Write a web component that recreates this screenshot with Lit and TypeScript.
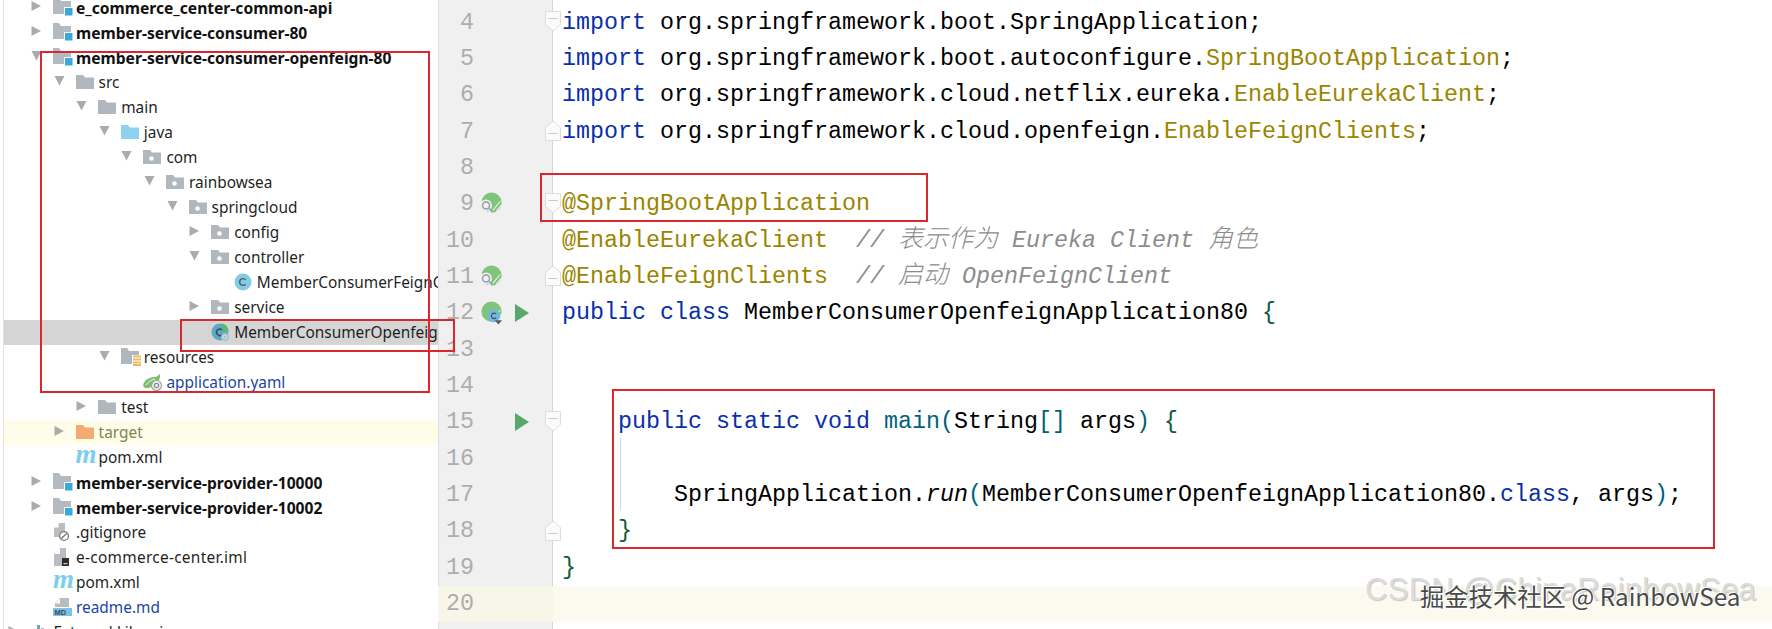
import { LitElement, html, css, svg } from "lit";
import { customElement } from "lit/decorators.js";

const folderPath = "M0 1.5h7l2 2.5h9v11.5H0z";
const folder = (c: string, dot = false) => svg`<svg width="19" height="18" viewBox="0 0 19 18"><path d=${folderPath} fill=${c} transform="translate(0 0.5)"/>${dot ? svg`<circle cx="8.5" cy="10.5" r="2.3" fill="#fff"/>` : ""}</svg>`;
const moduleIco = svg`<svg width="20" height="20" viewBox="0 0 20 20"><path d="M0 1h6l2 3h10v13H0z" fill="#b4bac1"/><rect x="11" y="10" width="8" height="8" fill="#fff"/><rect x="12" y="11" width="7.5" height="7.5" fill="#3ba8dc"/></svg>`;
const resources = svg`<svg width="21" height="20" viewBox="0 0 21 20"><path d="M0 1h6l2 3h10v13H0z" fill="#b0b7be"/><rect x="11" y="8" width="9" height="11" fill="#fff"/><path d="M12 9.5h8M12 12.5h8M12 15.5h8M12 18h8" stroke="#e6bd62" stroke-width="1.8"/></svg>`;
const classIco = svg`<svg width="18" height="18" viewBox="0 0 18 18"><circle cx="9" cy="9" r="8.5" fill="#82cce4"/><path d="M11.6 6.8A3.4 3.4 0 1 0 11.6 11.2" fill="none" stroke="#4a5a62" stroke-width="1.4"/></svg>`;
const mainClass = svg`<svg width="20" height="20" viewBox="0 0 20 20"><circle cx="9" cy="10" r="8.5" fill="#59a9c9"/><path d="M11 1.5a8.5 8.5 0 0 1 6.5 7.5h-6.5z" fill="#5fb95f"/><path d="M11 8A3.2 3.2 0 1 0 11 12.6" fill="none" stroke="#3c4a52" stroke-width="1.4"/><circle cx="14" cy="15" r="4" fill="#a9bccb"/><circle cx="14" cy="15" r="2" fill="none" stroke="#dde5ea" stroke-width="1"/></svg>`;
const yaml = svg`<svg width="20" height="18" viewBox="0 0 20 18"><path d="M0 13C1 6 7 4 13 4l4-3c.5 4-1 7-3 9l-8 5H2z" fill="#7cc06c"/><path d="M3 12c3-4 6-5 9-6" stroke="#fff" stroke-width="1" fill="none"/><circle cx="13.5" cy="12.5" r="5" fill="#f2f2f2" stroke="#9aa5ad" stroke-width="1.2"/><circle cx="13.5" cy="12.5" r="2.2" fill="none" stroke="#7f8b93" stroke-width="1.2"/></svg>`;
const mavenIco = html`<span class="mvn">m</span>`;
const fileBase = "M5 0h6v14H0V5z";
const gitIco = svg`<svg width="16" height="20" viewBox="0 0 16 20"><path d=${fileBase} fill="#b9bdc2" transform="translate(1 1)"/><path d="M1 5.5 5.5 1v4.5z" fill="#fff"/><circle cx="11" cy="14" r="4.400" fill="#fff" stroke="#777" stroke-width="1.3"/><path d="M8.200 16.600 13.800 11.400" stroke="#777" stroke-width="1.3"/></svg>`;
const imlIco = svg`<svg width="16" height="20" viewBox="0 0 16 20"><path d="M6 0h6v18H0V6z" fill="#b9bdc2" transform="translate(1 1)"/><path d="M1 7 7 1v6z" fill="#fff"/><rect x="9" y="11" width="7" height="8" fill="#2c2c2c"/><rect x="10.500" y="16" width="4" height="1.200" fill="#ccc"/></svg>`;
const mdIco = svg`<svg width="20" height="20" viewBox="0 0 20 20"><path d="M7 1h9v9H2V6z" fill="#b9bdc2"/><path d="M2 6.500 7 1.500v5z" fill="#fff"/><rect x="0" y="11" width="19" height="8" fill="#7cc3e4"/><text x="1.500" y="18" font-family="Liberation Sans" font-weight="700" font-size="7.500" fill="#3a4a5c">MD</text></svg>`;
const libIco = svg`<svg width="20" height="18" viewBox="0 0 20 18"><rect x="3" y="6" width="3" height="12" fill="#8fbf7f"/><rect x="7" y="2" width="3" height="16" fill="#7f9fb0"/><rect x="11" y="5" width="3" height="13" fill="#b0b6bd"/></svg>`;

type Row = { d: number; a?: "r" | "d"; i: unknown; t: string; c?: string };
const rows: Row[] = [
  { d: 0, a: "r", i: moduleIco, t: "e_commerce_center-common-api", c: "b" },
  { d: 0, a: "r", i: moduleIco, t: "member-service-consumer-80", c: "b" },
  { d: 0, a: "d", i: moduleIco, t: "member-service-consumer-openfeign-80", c: "b" },
  { d: 1, a: "d", i: folder("#b0b7be"), t: "src" },
  { d: 2, a: "d", i: folder("#b0b7be"), t: "main" },
  { d: 3, a: "d", i: folder("#8dd3ee"), t: "java" },
  { d: 4, a: "d", i: folder("#b0b7be", true), t: "com" },
  { d: 5, a: "d", i: folder("#b0b7be", true), t: "rainbowsea" },
  { d: 6, a: "d", i: folder("#b0b7be", true), t: "springcloud" },
  { d: 7, a: "r", i: folder("#b0b7be", true), t: "config" },
  { d: 7, a: "d", i: folder("#b0b7be", true), t: "controller" },
  { d: 8, i: classIco, t: "MemberConsumerFeignController" },
  { d: 7, a: "r", i: folder("#b0b7be", true), t: "service" },
  { d: 7, i: mainClass, t: "MemberConsumerOpenfeignApplication80", c: "sel" },
  { d: 3, a: "d", i: resources, t: "resources" },
  { d: 4, i: yaml, t: "application.yaml", c: "blue" },
  { d: 2, a: "r", i: folder("#b0b7be"), t: "test" },
  { d: 1, a: "r", i: folder("#f3ab70"), t: "target", c: "tgt" },
  { d: 1, i: mavenIco, t: "pom.xml" },
  { d: 0, a: "r", i: moduleIco, t: "member-service-provider-10000", c: "b" },
  { d: 0, a: "r", i: moduleIco, t: "member-service-provider-10002", c: "b" },
  { d: 0, i: gitIco, t: ".gitignore" },
  { d: 0, i: imlIco, t: "e-commerce-center.iml", c: "sp" },
  { d: 0, i: mavenIco, t: "pom.xml" },
  { d: 0, i: mdIco, t: "readme.md", c: "blue" },
  { d: -1, a: "r", i: libIco, t: "External Libraries" },
];

const arrow = (a?: "r" | "d") =>
  a === "r"
    ? svg`<svg width="11" height="12" viewBox="0 0 11 12"><path d="M0.500 1 10 6 0.500 11z" fill="#ababab"/></svg>`
    : a === "d"
    ? svg`<svg width="11" height="12" viewBox="0 0 11 12"><path d="M0.500 1h10L5.500 10.500z" fill="#ababab"/></svg>`
    : "";

const springIco = (main = false) => svg`<svg width="24" height="26" viewBox="0 0 24 26">
  <circle cx="11.500" cy="11.500" r="11" fill="#7fc47a"/>
  <path d="M13 20 21 10M16.500 21 22 14.500" stroke="#f0f0f0" stroke-width="1.200"/>
  ${main
    ? svg`<circle cx="14" cy="16" r="7" fill="#6fb9e0"/><path d="M16.500 14A3 3 0 1 0 16.500 18.200" fill="none" stroke="#46525c" stroke-width="1.300"/><path d="M15 21h8l-4 4.500z" fill="#5c5c5c"/>`
    : svg`<circle cx="5.500" cy="14.500" r="6.500" fill="#f0f0f0"/><path d="M8 18 13 23H8z" fill="#f0f0f0"/><circle cx="5.500" cy="14.500" r="3.800" fill="#f0f0f0" stroke="#9aa3ad" stroke-width="1.700"/><path d="M8.500 17.500 12.500 22" stroke="#9aa3ad" stroke-width="1.800"/>`}
</svg>`;
const play = svg`<svg width="14" height="18" viewBox="0 0 14 18"><path d="M0 0 14 9 0 18z" fill="#59a869"/></svg>`;
const foldD = svg`<svg width="16" height="21" viewBox="0 0 16 21"><path d="M.5.5h15v13L8 20 .5 13.500z" fill="#fbfbfb" stroke="#dcdcdc"/><path d="M3.500 7.500h9" stroke="#c9c9c9"/></svg>`;
const foldU = svg`<svg width="16" height="21" viewBox="0 0 16 21"><path d="M.5 20.500h15v-13L8 1 .5 7.500z" fill="#fbfbfb" stroke="#dcdcdc"/><path d="M3.500 13.500h9" stroke="#c9c9c9"/></svg>`;

const k = (s: string) => html`<span class="kw">${s}</span>`;
const an = (s: string) => html`<span class="an">${s}</span>`;
const cm = (s: string) => html`<span class="cm">${s}</span>`;
const cj = (s: string) => html`<span class="cm cj">${s}</span>`;

type Line = { n: number; code?: unknown; spring?: "s" | "m"; run?: boolean; fold?: "d" | "u"; cur?: boolean };
const lines: Line[] = [
  { n: 4, fold: "d", code: html`${k("import")} org.springframework.boot.SpringApplication;` },
  { n: 5, code: html`${k("import")} org.springframework.boot.autoconfigure.${an("SpringBootApplication")};` },
  { n: 6, code: html`${k("import")} org.springframework.cloud.netflix.eureka.${an("EnableEurekaClient")};` },
  { n: 7, fold: "u", code: html`${k("import")} org.springframework.cloud.openfeign.${an("EnableFeignClients")};` },
  { n: 8 },
  { n: 9, spring: "s", fold: "d", code: an("@SpringBootApplication") },
  { n: 10, code: html`${an("@EnableEurekaClient")}  ${cm("// ")}${cj("表示作为")}${cm(" Eureka Client ")}${cj("角色")}` },
  { n: 11, spring: "s", fold: "u", code: html`${an("@EnableFeignClients")}  ${cm("// ")}${cj("启动")}${cm(" OpenFeignClient")}` },
  { n: 12, spring: "m", run: true, code: html`${k("public")} ${k("class")} MemberConsumerOpenfeignApplication80 <span class="br">{</span>` },
  { n: 13 },
  { n: 14 },
  { n: 15, run: true, fold: "d", code: html`    ${k("public")} ${k("static")} ${k("void")} <span class="fn">main(</span>String<span class="fn">[]</span> args<span class="fn">)</span> <span class="br">{</span>` },
  { n: 16 },
  { n: 17, code: html`        SpringApplication.<i>run</i><span class="fn">(</span>MemberConsumerOpenfeignApplication80.${k("class")}, args<span class="fn">)</span>;` },
  { n: 18, fold: "u", code: html`    <span class="br">}</span>` },
  { n: 19, code: html`<span class="br">}</span>` },
  { n: 20, cur: true },
];

const boxes = [
  [40, 51, 390, 342],
  [180, 319, 275, 33],
  [540, 173, 388, 49],
  [612, 389, 1103, 160],
];

@customElement("app-root")
export class AppRoot extends LitElement {
  static styles = css`
    :host { display: block; width: 1772px; height: 629px; position: relative; overflow: hidden; background: #fff; }
    .page { display: flex; height: 629px; overflow: hidden; }
    .side { flex: none; width: 435px; margin-left: 3px; border-left: 1px solid #e2e2e2; box-sizing: border-box; overflow: hidden; }
    .tree { margin-top: -5px; margin-left: -4px; }
    .row { height: 25px; display: flex; align-items: center; box-sizing: border-box; white-space: nowrap; font: 15.4px "Noto Sans", sans-serif; color: #1f1f1f; }
    .row .ar { flex: none; width: 22px; display: flex; align-items: center; margin-top: -3px; }
    .row .ic { flex: none; width: 23px; height: 25px; display: flex; align-items: center; margin-top: -1px; }
    .row.b { font-weight: 700; font-size: 15.62px; color: #111; }
    .row.sel { background: #d5d5d5; margin-left: 4px; }
    .row.tgt { background: #fdfde9; color: #83834f; margin-left: 4px; }
    .row.blue { color: #1c45a5; }
    .row.sp { letter-spacing: 0.3px; }
    .mvn { font: italic 700 27px/20px "Liberation Serif", serif; letter-spacing: -1px; margin-top: -6px; color: #7dcdec; }
    .editor { flex: 1; padding-top: 4.5px; font: 23.33px "Liberation Mono", monospace; color: #000; position: relative; min-width: 0; }
    .editor::before { content: ""; position: absolute; left: 0; top: 0; bottom: 0; width: 115px; box-sizing: border-box; background: #f0f0f0; border-left: 1px solid #dedede; border-right: 1px solid #d4d4d4; }
    .line { height: 36.33px; display: flex; align-items: center; position: relative; white-space: pre; }
    .line.cur { background: #fcfaef; }
    .gut { flex: none; width: 115px; height: 100%; display: flex; align-items: center; color: #adadad; }
    .cur .gut { background: #f8f6e9; }
    .num { flex: none; width: 36px; text-align: right; }
    .g1 { flex: none; width: 22px; margin-left: 7px; height: 26px; display: flex; }
    .g2 { flex: none; width: 14px; margin-left: 12px; height: 18px; display: flex; }
    .g3 { flex: none; width: 16px; margin-left: 16px; height: 21px; display: flex; margin-top: -2px; }
    .code { padding-left: 9px; line-height: 36px; }
    .kw { color: #0a2fa8; }
    .an { color: #9a8500; }
    .cm { color: #8c8c8c; font-style: italic; }
    .cj { font-family: "Noto Sans CJK SC", sans-serif; font-size: 25px; line-height: 0; font-weight: 300; }
    .fn { color: #00627a; }
    .br { color: #0d5c3a; }
    .guide { position: absolute; left: 620px; top: 438px; width: 1px; height: 72px; background: #d8d8d8; }
    .red { position: absolute; box-sizing: border-box; border: 2.5px solid #d9272e; pointer-events: none; }
    .wm1 { position: absolute; left: 1365px; top: 572px; white-space: nowrap; font: 31px "Liberation Sans", sans-serif; color: #dcdcdc; letter-spacing: 0.3px; text-shadow: 1px 1px 1px #c4c4c4, -1px -1px 0 #fff; }
    .wm2 { position: absolute; left: 1420px; top: 578px; white-space: nowrap; font: 24.3px "Noto Sans CJK SC", sans-serif; color: #4a4a4a; text-shadow: 1px 1px 0 #fff, -1px -1px 0 #fff; }
  `;

  render() {
    return html`
      <div class="page">
        <div class="side">
          <div class="tree">
            ${rows.map(
              (r) => html`<div class="row ${r.c ?? ""}" style="padding-left:${(r.c === "sel" || r.c === "tgt" ? 27 : 31) + 22.6 * r.d}px">
                <span class="ar">${arrow(r.a)}</span><span class="ic">${r.i}</span><span>${r.t}</span>
              </div>`
            )}
          </div>
        </div>
        <div class="editor">
          ${lines.map(
            (l) => html`<div class="line ${l.cur ? "cur" : ""}">
              <div class="gut">
                <span class="num">${l.n}</span>
                <span class="g1">${l.spring ? springIco(l.spring === "m") : ""}</span>
                <span class="g2">${l.run ? play : ""}</span>
                <span class="g3">${l.fold === "d" ? foldD : l.fold === "u" ? foldU : ""}</span>
              </div>
              <div class="code">${l.code ?? ""}</div>
            </div>`
          )}
        </div>
      </div>
      <div class="guide"></div>
      ${boxes.map((b) => html`<div class="red" style="left:${b[0]}px;top:${b[1]}px;width:${b[2]}px;height:${b[3]}px"></div>`)}
      <div class="wm1">CSDN @ChinaRainbowSea</div>
      <div class="wm2">掘金技术社区 @ RainbowSea</div>
    `;
  }
}
